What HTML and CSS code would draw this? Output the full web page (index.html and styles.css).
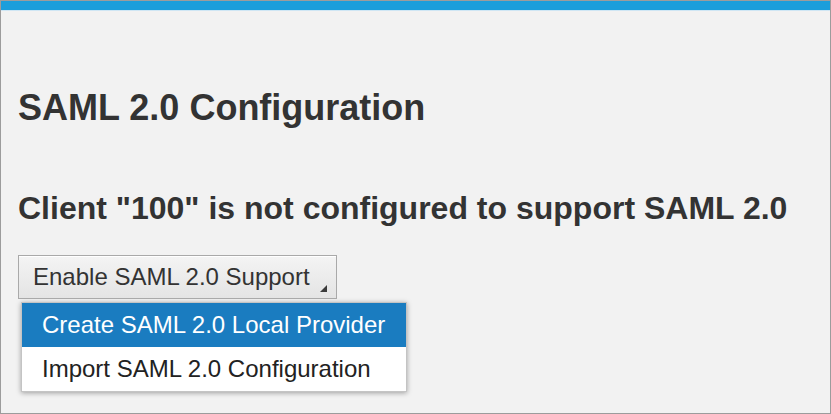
FILE: index.html
```html
<!DOCTYPE html>
<html>
<head>
<meta charset="utf-8">
<link rel="stylesheet" href="styles.css">
</head>
<body>
<div class="window">
  <div class="topbar"></div>
  <div class="content">
    <h1 class="title">SAML 2.0 Configuration</h1>
    <h2 class="subtitle">Client "100" is not configured to support SAML 2.0</h2>
    <div class="button">Enable SAML 2.0 Support<span class="corner"></span></div>
    <ul class="menu">
      <li class="item selected">Create SAML 2.0 Local Provider</li>
      <li class="item">Import SAML 2.0 Configuration</li>
    </ul>
  </div>
</div>
</body>
</html>
```
FILE: styles.css
```css
html, body {
  margin: 0;
  padding: 0;
}
body {
  font-family: "Liberation Sans", Arial, sans-serif;
  background: #f2f2f2;
}
.window {
  box-sizing: border-box;
  width: 831px;
  height: 414px;
  border: 1px solid #9c9c9c;
  background: #f2f2f2;
  overflow: hidden;
}
.topbar {
  height: 9px;
  background: #1b9edb;
  border-bottom: 1px solid #cfe6f4;
}
.content {
  padding-left: 17px;
}
.title {
  margin: 79px 0 0 0;
  font-size: 36px;
  line-height: 36px;
  font-weight: bold;
  color: #333333;
}
.subtitle {
  margin: 66px 0 0 0;
  font-size: 32px;
  line-height: 32px;
  font-weight: bold;
  color: #333333;
}
.button {
  position: relative;
  box-sizing: border-box;
  display: flex;
  align-items: center;
  width: 319px;
  height: 44px;
  margin-top: 31px;
  padding-left: 14px;
  border: 1px solid #a9a9a9;
  background: linear-gradient(#f4f4f4, #e4e4e4);
  box-shadow: inset 0 1px 0 #ffffff;
  font-size: 24px;
  color: #333333;
}
.corner {
  position: absolute;
  right: 9px;
  bottom: 6px;
  width: 0;
  height: 0;
  border-left: 7px solid transparent;
  border-bottom: 7px solid #3a3a3a;
}
.menu {
  box-sizing: border-box;
  list-style: none;
  margin: 3px 0 0 3px;
  padding: 0;
  width: 386px;
  border: 1px solid #c4c4c4;
  background: #ffffff;
  box-shadow: 0 1px 5px rgba(0, 0, 0, 0.35);
}
.item {
  height: 44px;
  display: flex;
  align-items: center;
  padding-left: 20px;
  font-size: 24px;
  color: #222222;
}
.item.selected {
  background: #1a7cc0;
  color: #ffffff;
}
```
